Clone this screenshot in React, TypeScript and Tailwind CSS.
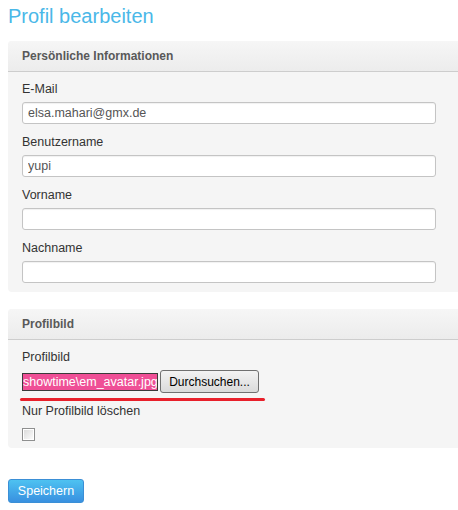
import React from 'react';

// Profil bearbeiten – Formular mit zwei Panels
const fields = [
  { label: 'E-Mail', value: 'elsa.mahari@gmx.de' },
  { label: 'Benutzername', value: 'yupi' },
  { label: 'Vorname', value: '' },
  { label: 'Nachname', value: '' },
];

function PanelHeader({ title }: { title: string }) {
  return (
    <div className="flex h-[31px] items-center border-b border-[#cdcdcd] bg-gradient-to-b from-[#f6f6f6] to-[#ececec] px-[14px] text-[12px] font-bold text-[#595959]">
      {title}
    </div>
  );
}

export default function App() {
  return (
    <div
      className="w-[458px] bg-white pl-2 text-[12.5px] text-[#333]"
      style={{ fontFamily: '"Liberation Sans", Arial, sans-serif' }}
    >
      {/* Titel */}
      <h1 className="pt-[4px] text-[20px] leading-[24px] text-[#4ab8e8]">Profil bearbeiten</h1>

      {/* Persönliche Informationen */}
      <div className="mt-[13px] overflow-hidden rounded-l-[4px] bg-[#f5f5f5]">
        <PanelHeader title="Persönliche Informationen" />
        <div className="px-[14px] pt-[8px] pb-[9px]">
          {fields.map((f, i) => (
            <div key={f.label} className={i > 0 ? 'mt-[9px]' : ''}>
              <div className="h-[18px] leading-[18px]">{f.label}</div>
              <input
                readOnly
                value={f.value}
                className="mt-[4px] block h-[22px] w-[414px] rounded-[3px] border border-[#c4c4c4] bg-white px-[5px] text-[12.5px] text-[#555] shadow-[inset_0_1px_1px_rgba(0,0,0,0.06)] outline-none"
              />
            </div>
          ))}
        </div>
      </div>

      {/* Profilbild */}
      <div className="mt-[17px] overflow-hidden rounded-l-[4px] bg-[#f5f5f5]">
        <PanelHeader title="Profilbild" />
        <div className="px-[14px] pt-[8px] pb-[7px]">
          <div className="h-[18px] leading-[18px]">Profilbild</div>
          <div className="mt-[4px] flex h-[23px] items-center">
            <div className="flex h-[18px] w-[136px] items-center overflow-hidden border border-[#3a3a3a] bg-white">
              <span className="whitespace-nowrap bg-[#ef4f96] leading-[16px] text-white">showtime\em_avatar.jpg</span>
            </div>
            <button className="ml-[2px] h-[23px] w-[99px] rounded-[3px] border border-[#707070] bg-gradient-to-b from-[#f3f3f3] to-[#dadada] text-[12px] text-black">
              Durchsuchen...
            </button>
          </div>
          {/* rote Markierung */}
          <div className="mt-[5px] -ml-[2px] h-[3px] w-[245px] rounded-full bg-[#e8202b]" />
          <div className="mt-[1px] h-[18px] leading-[18px]">Nur Profilbild löschen</div>
          <div className="mt-[8px] flex h-[13px] w-[13px] items-center justify-center border border-[#8e8f8f] bg-white">
            <div className="h-[9px] w-[9px] bg-gradient-to-br from-[#dcdcdc] to-[#fbfbfb]" />
          </div>
        </div>
      </div>

      {/* Speichern */}
      <button className="mt-[31px] mb-[7px] h-[24px] w-[76px] rounded-[3px] border border-[#3b8fd6] bg-gradient-to-b from-[#4ec2f1] to-[#3990e0] text-[12.5px] text-white">
        Speichern
      </button>
    </div>
  );
}
